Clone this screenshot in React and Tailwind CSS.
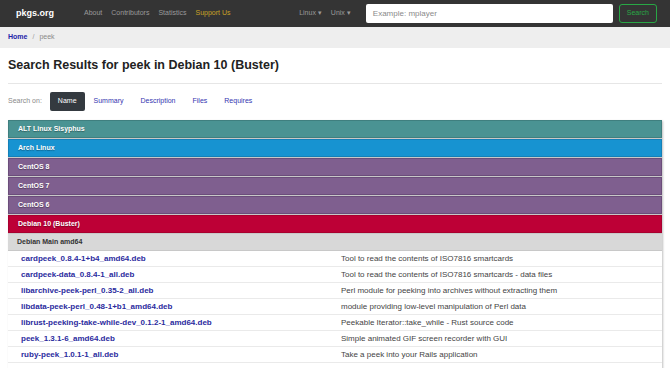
const repos = [
  { name: "ALT Linux Sisyphus", cls: "bg-[#4a9393] border-[#3f7f7f]" },
  { name: "Arch Linux", cls: "bg-[#1793d1] border-[#1480b8]" },
  { name: "CentOS 8", cls: "bg-[#7f5f8f] border-[#6b4d7a]" },
  { name: "CentOS 7", cls: "bg-[#7f5f8f] border-[#6b4d7a]" },
  { name: "CentOS 6", cls: "bg-[#7f5f8f] border-[#6b4d7a]" },
  { name: "Debian 10 (Buster)", cls: "bg-[#bd0036] border-[#a8002f]" },
]

const packages = [
  ["cardpeek_0.8.4-1+b4_amd64.deb", "Tool to read the contents of ISO7816 smartcards"],
  ["cardpeek-data_0.8.4-1_all.deb", "Tool to read the contents of ISO7816 smartcards - data files"],
  ["libarchive-peek-perl_0.35-2_all.deb", "Perl module for peeking into archives without extracting them"],
  ["libdata-peek-perl_0.48-1+b1_amd64.deb", "module providing low-level manipulation of Perl data"],
  ["librust-peeking-take-while-dev_0.1.2-1_amd64.deb", "Peekable Iterator::take_while - Rust source code"],
  ["peek_1.3.1-6_amd64.deb", "Simple animated GIF screen recorder with GUI"],
  ["ruby-peek_1.0.1-1_all.deb", "Take a peek into your Rails application"],
  ["ruby-peek-gc_0.0.2-1_all.deb", "Take a peek into the GC info of your Rails application"],
]

export default function App() {
  return (
    <div className="w-[670px] h-[368px] overflow-hidden bg-white font-['Liberation_Sans',Arial,sans-serif]">
      <nav className="h-[27px] bg-[#343434] flex items-center pl-4 pr-[13px]">
        <span className="text-white font-bold text-[9px]">pkgs.org</span>
        <div className="flex gap-[9px] ml-[30px] text-[7px] text-[#9a9a9a]">
          <span>About</span>
          <span>Contributors</span>
          <span>Statistics</span>
          <span className="text-[#c9a227]">Support Us</span>
        </div>
        <div className="flex gap-[9px] ml-auto text-[7px] text-[#9a9a9a]">
          <span>Linux ▾</span>
          <span>Unix ▾</span>
        </div>
        <div className="ml-[15px] w-[247px] h-[19px] bg-white rounded-[2px] flex items-center px-[7px] text-[8px] text-[#8a8a8a]">
          Example: mplayer
        </div>
        <div className="ml-[6px] h-[19px] px-[7px] border border-[#28a745] rounded-[3px] flex items-center text-[7px] text-[#28a745]">
          Search
        </div>
      </nav>

      <div className="h-[21px] bg-[#eeeeee] flex items-center px-2 text-[7px]">
        <span className="font-bold text-[#2323a8]">Home</span>
        <span className="text-[#9a9a9a] ml-[5px]">/</span>
        <span className="text-[#8a8a8a] ml-[5px]">peek</span>
      </div>

      <div className="px-2">
        <h1 className="mt-[8px] text-[12.5px] font-bold text-[#222] leading-[18px]">
          Search Results for peek in Debian 10 (Buster)
        </h1>
        <div className="border-t border-[#e6e6e6] mt-[9px]" />

        <div className="flex items-center h-[19px] mt-[8px] text-[7px]">
          <span className="text-[#8a8a8a]">Search on:</span>
          <span className="ml-[8px] h-[19px] px-[8px] bg-[#343a40] text-white rounded-[2px] flex items-center">Name</span>
          <span className="ml-[9px] text-[#3535b0]">Summary</span>
          <span className="ml-[17px] text-[#3535b0]">Description</span>
          <span className="ml-[17px] text-[#3535b0]">Files</span>
          <span className="ml-[17px] text-[#3535b0]">Requires</span>
        </div>

        <div className="mt-[9px] flex flex-col gap-px shadow-[1px_1px_2px_rgba(0,0,0,0.25)] bg-[#c8c8c8]">
          {repos.map((r) => (
            <div
              key={r.name}
              className={`h-[18px] flex items-center pl-[9px] border text-white font-bold text-[7px] [text-shadow:0_1px_1px_rgba(0,0,0,0.35)] ${r.cls}`}
            >
              {r.name}
            </div>
          ))}
          <div className="h-[16px] bg-[#d8d8d8] flex items-center pl-[9px] text-[7px] font-bold text-[#333]">
            Debian Main amd64
          </div>
          <div className="bg-white">
            {packages.map(([p, d]) => (
              <div key={p} className="h-[16px] flex items-center border-b border-[#eaeaea] text-[8px]">
                <span className="w-[333px] pl-[13px] font-bold text-[#2b2b9e]">{p}</span>
                <span className="text-[#444]">{d}</span>
              </div>
            ))}
          </div>
        </div>
      </div>
    </div>
  )
}
